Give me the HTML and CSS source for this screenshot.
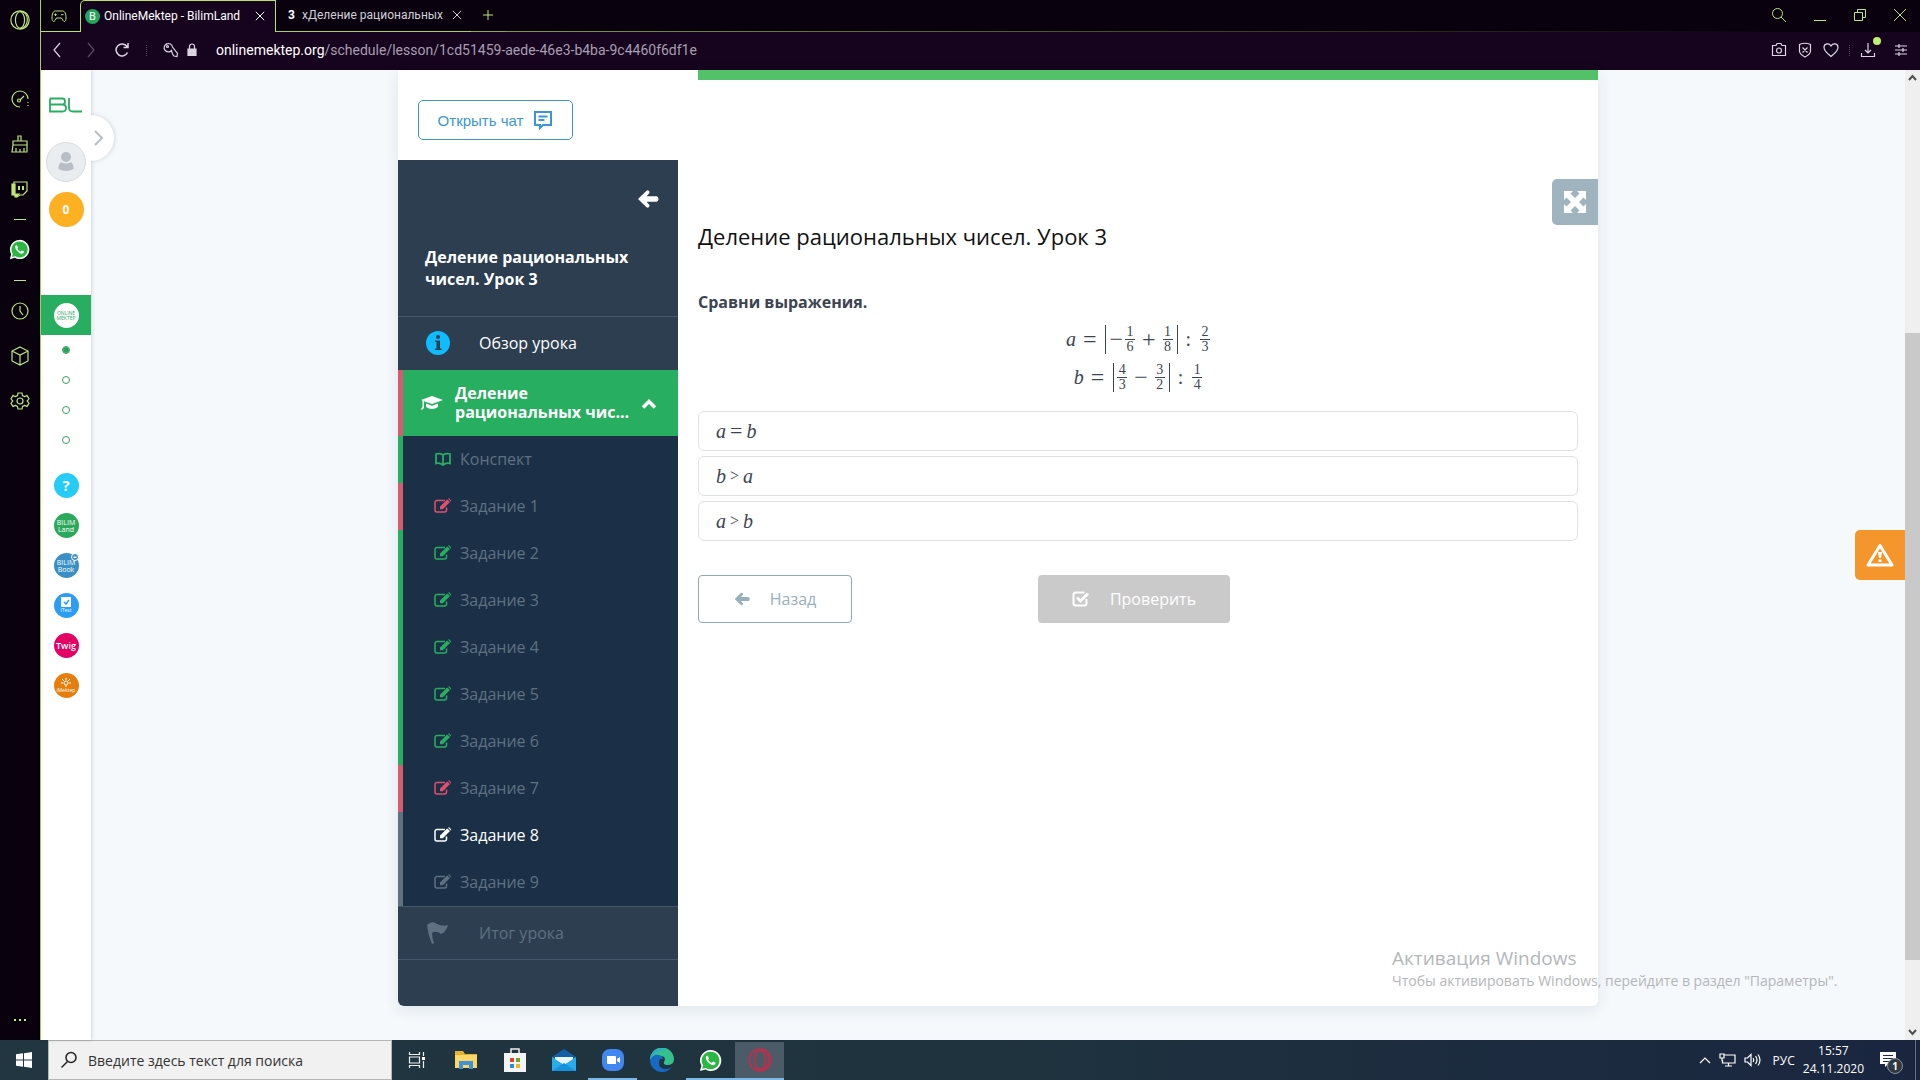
FILE: index.html
```html
<!DOCTYPE html>
<html lang="ru">
<head>
<meta charset="utf-8">
<meta name="viewport" content="width=device-width, initial-scale=1">
<title>OnlineMektep - BilimLand</title>
<link rel="stylesheet" href="styles.css">
</head>
<body>
<svg class="sprite" aria-hidden="true">
  <symbol id="edit" viewBox="0 0 18 16"><path d="M12.500 9.500V12a2 2 0 0 1-2 2H3a2 2 0 0 1-2-2V4.500a2 2 0 0 1 2-2h8" fill="none" stroke="currentColor" stroke-width="1.500"/><path d="M6 8.500 13.200 1.400 16 4.100 8.800 11.200H6z" fill="currentColor"/><path d="M14 .8a1.200 1.200 0 0 1 1.700 0l1.100 1.100a1.200 1.200 0 0 1 0 1.700" fill="currentColor"/></symbol>
  <symbol id="left" viewBox="0 0 22 18"><path d="M1 9 9.500.8q1.200-1 2.500.3 1 1.200 0 2.400L9.600 6.300H19.500q2 0 2 2.700t-2 2.700H9.600l2.400 2.800q1 1.200 0 2.400-1.300 1.300-2.500.3z" fill="currentColor"/></symbol>
  <symbol id="whatsapp" viewBox="0 0 24 24"><path d="M12 1a11 11 0 0 0-9.500 16.500L1 23l5.700-1.500A11 11 0 1 0 12 1z" fill="#fff"/><path d="M12 2.800a9.200 9.200 0 0 0-7.700 14.200l-1 3.700 3.800-1A9.200 9.200 0 1 0 12 2.800z" fill="#2cb742"/><path d="M8.500 6.800c-1.700 1-1.900 2.900-.6 5 1.500 2.500 3.500 4.300 6 5 1.700.4 3.200-.6 3.300-2.400l-2.500-1.300-1.300 1.400c-2-.8-3.100-2-3.900-3.600l1-1.300z" fill="#fff"/></symbol>
  <symbol id="opera" viewBox="0 0 24 24"><g fill="none" stroke="currentColor" stroke-width="1.300"><circle cx="12" cy="12" r="10"/><ellipse cx="12" cy="12" rx="5" ry="9"/><path d="M12 2.500c6 0 8 5 8 9.500s-3 9.500-8 9.500"/></g></symbol>
  <symbol id="close" viewBox="0 0 12 12"><path d="m1 1 10 10M11 1 1 11" stroke="currentColor" stroke-width="1.200" fill="none"/></symbol>
</svg>

<div class="desktop">
  <div class="browser">
    <aside class="gx">
      <button class="gx-logo" aria-label="Opera GX"><svg width="22" height="22"><use href="#opera"/></svg></button>
      <button class="gx-item" aria-label="GX Control"><svg width="20" height="20" viewBox="0 0 20 20"><path d="M10 18A8 8 0 1 1 18 10M10 11l4-4M18 13v1M18 16v1"/><circle cx="9" cy="11.500" r="1.500"/></svg></button>
      <button class="gx-item" aria-label="GX Cleaner"><svg width="20" height="20" viewBox="0 0 20 20"><path d="M8 7V2h3v5M3 7h14v4H3zM3 11l-1 7h15V11M6 14v4M10 15v3M14 14v4"/></svg></button>
      <button class="gx-item" aria-label="Twitch"><svg width="20" height="20" viewBox="0 0 20 20"><path d="M4 3h13v9l-4 4h-3l-3 2v-2H4z"/><path d="M2 5h3v10h4l-3 3H5v-2H2z" fill="currentColor"/><path d="M9 7v4M13 7v4" stroke-width="2"/></svg></button>
      <span class="gx-dash"></span>
      <button class="gx-item" aria-label="WhatsApp"><svg class="plain" width="21" height="21"><use href="#whatsapp"/></svg></button>
      <span class="gx-dash"></span>
      <button class="gx-item" aria-label="История"><svg width="20" height="20" viewBox="0 0 20 20"><circle cx="10" cy="10" r="8"/><path d="M10 5v5l3 4"/></svg></button>
      <button class="gx-item" aria-label="Расширения"><svg width="20" height="20" viewBox="0 0 20 20"><path d="m10 1 8 4v10l-8 4-8-4V5zM2 5l8 4 8-4M10 9v10"/></svg></button>
      <button class="gx-item" aria-label="Настройки"><svg width="20" height="20" viewBox="0 0 20 20"><path d="M8 2h4l.5 2.500 2 1L17 4.600l2 3.200L17.200 10 19 12.200l-2 3.200-2.500-.9-2 1L12 18H8l-.5-2.500-2-1-2.500.9-2-3.200L2.800 10 1 7.800l2-3.200 2.500.9 2-1z"/><circle cx="10" cy="10" r="3"/></svg></button>
      <button class="gx-more" aria-label="Ещё"><i></i><i></i><i></i></button>
    </aside>

    <div class="window">
      <header class="tabs">
        <button class="corner" aria-label="GX Corner"><svg width="16" height="14" viewBox="0 0 16 14"><path d="M4.500 2h7c2.500 0 3.500 3 3.500 7s-2 4-3 2.500L10.500 9h-5L4 11.500C3 13 1 13 1 9s1-7 3.500-7zM4.500 4.500v2.500M3.300 5.700h2.500M10 5.700h2.500"/></svg></button>
        <div class="tab active"><span class="fav">B</span><span class="tab-name">OnlineMektep - BilimLand</span><button class="x" aria-label="Закрыть"><svg width="10" height="10"><use href="#close"/></svg></button></div>
        <div class="tab"><b class="fav3">3</b><span class="tab-name">хДеление рациональных</span><button class="x" aria-label="Закрыть"><svg width="10" height="10"><use href="#close"/></svg></button></div>
        <button class="plus" aria-label="Новая вкладка"><svg width="12" height="12" viewBox="0 0 12 12"><path d="M6 1v10M1 6h10"/></svg></button>
        <div class="controls">
          <button aria-label="Поиск"><svg width="16" height="16" viewBox="0 0 16 16"><circle cx="6.500" cy="6.500" r="5"/><path d="m10 10 5 5"/></svg></button>
          <button aria-label="Свернуть"><svg width="14" height="14" viewBox="0 0 14 14"><path d="M1 12.500h12"/></svg></button>
          <button aria-label="Окно"><svg width="14" height="14" viewBox="0 0 14 14"><path d="M1.500 4.500h8v8h-8zM4.500 4V1.500h8v8H10"/></svg></button>
          <button aria-label="Закрыть"><svg width="14" height="14" viewBox="0 0 14 14"><path d="m1 1 12 12M13 1 1 13"/></svg></button>
        </div>
      </header>

      <div class="address">
        <button aria-label="Назад"><svg width="16" height="16" viewBox="0 0 16 16"><path d="M10 1 4 8l6 7"/></svg></button>
        <button class="dim" aria-label="Вперёд"><svg width="16" height="16" viewBox="0 0 16 16"><path d="m6 1 6 7-6 7"/></svg></button>
        <button aria-label="Обновить"><svg width="16" height="16" viewBox="0 0 16 16"><path d="M13.500 10.500A6 6 0 1 1 13 4.500M14 1v4.500H9.500" stroke-width="1.500"/></svg></button>
        <span class="sep"></span>
        <button class="tight" aria-label="Пароли"><svg width="16" height="16" viewBox="0 0 16 16"><path d="M8.500 8.500A4.200 4.200 0 1 1 9.500 5l5 6.500-.5 3-3-.5-1.500-2z"/><circle cx="4.500" cy="4.500" r="1"/></svg></button>
        <button class="tight" aria-label="Защищено"><svg width="10" height="14" viewBox="0 0 10 14"><path d="M2.500 6V3.500a2.500 2.500 0 0 1 5 0V6"/><path d="M1 6h8v6.500H1z" fill="currentColor"/></svg></button>
        <p class="url"><b>onlinemektep.org</b>/schedule/lesson/1cd51459-aede-46e3-b4ba-9c4460f6df1e</p>
        <div class="tools">
          <button aria-label="Снимок"><svg width="16" height="16" viewBox="0 0 16 16"><path d="M1.500 3.500H5L6 1.500h4l1 2h3.500v10h-13z"/><circle cx="8" cy="8.500" r="2.500"/></svg></button>
          <button aria-label="Блокировка"><svg width="16" height="16" viewBox="0 0 16 16"><path d="M2.500 2.500Q8 0 13.500 2.500v7Q13 12.500 8 15 3 12.500 2.500 9.500zM5.500 5.500l5 5M10.500 5.500l-5 5"/></svg></button>
          <button aria-label="Закладка"><svg width="16" height="16" viewBox="0 0 16 16"><path d="M8 14.500C3 10.500 1 8 1 5.500 1 1.500 6 .5 8 4c2-3.500 7-2.500 7 1.500 0 2.500-2 5-7 9z"/></svg></button>
          <span class="sep"></span>
          <button class="load" aria-label="Загрузки"><svg width="16" height="16" viewBox="0 0 16 16"><path d="M1.500 11v3.500h13V11M8 1v10M5 8l3 3 3-3"/></svg></button>
          <button aria-label="Меню"><svg width="14" height="14" viewBox="0 0 14 14"><path d="M1 3h12M1 7h12M1 11h12M5 1v4M9 5v4M5 9v4"/></svg></button>
        </div>
      </div>

      <div class="page">
        <nav class="rail">
          <a class="bl" href="#" aria-label="BilimLand"><svg width="34" height="16" viewBox="0 0 34 16"><path d="M1 1.500h12.500q2.500 0 2.500 3t-2.500 3H1M13.500 7.500q3.500 0 3.500 3.500t-3.500 3.500H1V1.500M20 1v10q0 3.500 4 3.500h9" fill="none" stroke="currentColor" stroke-width="1.800"/></svg></a>
          <button class="toggle" aria-label="Развернуть"><svg width="12" height="16" viewBox="0 0 12 16"><path d="m2 1 7 7-7 7" fill="none" stroke="currentColor" stroke-width="2"/></svg></button>
          <a class="avatar" href="#" aria-label="Профиль"><svg width="16" height="20" viewBox="0 0 16 20"><circle cx="8" cy="5" r="5" fill="currentColor"/><path d="M3 10q5 3 10 0 3 2 2.500 7-7.500 4-15 0Q0 12 3 10z" fill="currentColor"/></svg></a>
          <span class="points">0</span>
          <a class="current" href="#"><span>ONLINE<br>MEKTEP</span></a>
          <ul class="steps"><li class="on"></li><li></li><li></li><li></li></ul>
          <div class="apps">
            <a class="app help" href="#">?</a>
            <a class="app land" href="#">BILIM<br>Land</a>
            <a class="app book" href="#">BILIM<br>Book<svg class="badge" width="8" height="8" viewBox="0 0 8 8"><circle cx="4" cy="4" r="3.500" fill="#3a8fc4" stroke="#fff"/><path d="M2.500 5V3.500h3V5z" fill="#fff"/></svg></a>
            <a class="app test" href="#"><svg width="12" height="10" viewBox="0 0 12 10"><path d="M1 0h10v10H1z" fill="#fff"/><path d="m4 5 2 2 3-4" fill="none" stroke="#2b9df4" stroke-width="1.500"/></svg>iTest</a>
            <a class="app twig" href="#">Twig</a>
            <a class="app imek" href="#"><svg width="10" height="9" viewBox="0 0 10 9"><circle cx="5" cy="5" r="2" fill="none" stroke="#fff"/><path d="M5 0v2M1 1l2 2M9 1 7 3M0 5h2M8 5h2M4 8h2" stroke="#fff"/></svg>iMektep</a>
          </div>
        </nav>

        <main class="stage">
          <section class="card">
            <div class="card-top">
              <button class="chat">Открыть чат<svg width="20" height="20" viewBox="0 0 20 20"><path d="M2 2h16v13H10l-3 3v-3H2zM5.500 6.500h9M5.500 10h6" fill="none" stroke="currentColor" stroke-width="2"/></svg></button>
              <div class="progress"></div>
            </div>
            <div class="card-body">
              <nav class="menu">
                <div class="menu-head">
                  <button class="back" aria-label="Свернуть меню"><svg width="22" height="18"><use href="#left"/></svg></button>
                  <h2>Деление рациональных чисел. Урок 3</h2>
                </div>
                <a class="row" href="#"><svg width="24" height="24" viewBox="0 0 24 24"><circle cx="12" cy="12" r="12" fill="#0fbcff"/><circle cx="12" cy="6" r="2" fill="#2c3e50"/><path d="M9 9.500h5v8h1.500V19h-6.500v-1.500h1.500V11H9z" fill="#2c3e50"/></svg>Обзор урока</a>
                <button class="topic"><svg width="22" height="16" viewBox="0 0 22 16"><path d="M11 1 22 5 11 9 3 6.200V13L1 15l-1-1 1.500-2V5.500L0 5z" fill="currentColor"/><path d="m5 8.500 6 2.200 6-2.200V12q-6 4-12 0z" fill="currentColor"/></svg><span>Деление рациональных чис...</span><svg width="16" height="12" viewBox="0 0 16 12"><path d="m2 10.500 6-6 6 6" fill="none" stroke="currentColor" stroke-width="3.500"/></svg></button>
                <ul class="tasks">
                  <li class="ok"><a href="#"><svg width="16" height="14" viewBox="0 0 16 14"><path d="M8 3v10M8 3Q5 1 1 2v9.500q4-1 7 1.500 3-2.500 7-1.500V2Q11 1 8 3z" fill="none" stroke="currentColor" stroke-width="1.800"/></svg>Конспект</a></li>
                  <li class="bad"><a href="#"><svg width="18" height="16"><use href="#edit"/></svg>Задание 1</a></li>
                  <li class="ok"><a href="#"><svg width="18" height="16"><use href="#edit"/></svg>Задание 2</a></li>
                  <li class="ok"><a href="#"><svg width="18" height="16"><use href="#edit"/></svg>Задание 3</a></li>
                  <li class="ok"><a href="#"><svg width="18" height="16"><use href="#edit"/></svg>Задание 4</a></li>
                  <li class="ok"><a href="#"><svg width="18" height="16"><use href="#edit"/></svg>Задание 5</a></li>
                  <li class="ok"><a href="#"><svg width="18" height="16"><use href="#edit"/></svg>Задание 6</a></li>
                  <li class="bad"><a href="#"><svg width="18" height="16"><use href="#edit"/></svg>Задание 7</a></li>
                  <li class="now"><a href="#"><svg width="18" height="16"><use href="#edit"/></svg>Задание 8</a></li>
                  <li><a href="#"><svg width="18" height="16"><use href="#edit"/></svg>Задание 9</a></li>
                </ul>
                <a class="row end" href="#"><svg width="24" height="24" viewBox="0 0 24 24"><path d="M1 4Q6-1 11 3q6 3 11 1-2 7-7 9-5-4-9-1 0 5 2 10l-2 1Q2 14 1 4z" fill="currentColor"/></svg>Итог урока</a>
              </nav>

              <div class="lesson">
                <button class="full" aria-label="Во весь экран"><svg width="22" height="22" viewBox="0 0 22 22"><path d="M0 0h9L6.500 2.500 11 7l4.500-4.500L13 0h9v9l-2.500-2.500L15 11l4.500 4.500L22 13v9h-9l2.500-2.500L11 15l-4.500 4.500L9 22H0v-9l2.500 2.500L7 11 2.500 6.500 0 9z" fill="currentColor"/></svg></button>
                <h1>Деление рациональных чисел. Урок 3</h1>
                <h3>Сравни выражения.</h3>
                <div class="formula">
                  <div class="eq"><i>a</i><span class="rel">=</span><span class="abs">−<span class="frac"><span>1</span><span>6</span></span><span class="op">+</span><span class="frac"><span>1</span><span>8</span></span></span><span class="div">:</span><span class="frac"><span>2</span><span>3</span></span></div>
                  <div class="eq"><i>b</i><span class="rel">=</span><span class="abs"><span class="frac"><span>4</span><span>3</span></span><span class="op">−</span><span class="frac"><span>3</span><span>2</span></span></span><span class="div">:</span><span class="frac"><span>1</span><span>4</span></span></div>
                </div>
                <div class="answers">
                  <button><i>a</i><span>=</span><i>b</i></button>
                  <button><i>b</i><span class="gt">&gt;</span><i>a</i></button>
                  <button><i>a</i><span class="gt">&gt;</span><i>b</i></button>
                </div>
                <div class="actions">
                  <button class="prev"><svg width="16" height="14"><use href="#left"/></svg>Назад</button>
                  <button class="check"><svg width="18" height="16" viewBox="0 0 18 16"><path d="M14.500 8v4.500a2 2 0 0 1-2 2h-9a2 2 0 0 1-2-2v-9a2 2 0 0 1 2-2h9" fill="none" stroke="currentColor" stroke-width="2"/><path d="m5 6.500 3.500 3.500L16 2.500" fill="none" stroke="currentColor" stroke-width="3"/></svg>Проверить</button>
                </div>
              </div>
            </div>
          </section>
          <button class="report" aria-label="Сообщить об ошибке"><svg width="28" height="24" viewBox="0 0 28 24"><path d="M14 2.500 26 22H2z" fill="none" stroke="#fff" stroke-width="3" stroke-linejoin="round"/><path d="M12 9h4l-1 6h-2zM12.500 16.500h3v2.500h-3z" fill="#fff"/></svg></button>
        </main>
        <div class="scroll"><svg width="9" height="7" viewBox="0 0 9 7"><path d="m1 6 3.500-4L8 6"/></svg><span class="thumb"></span><svg width="9" height="7" viewBox="0 0 9 7"><path d="m1 1 3.500 4L8 1"/></svg></div>
        <div class="activate"><p class="act-title">Активация Windows</p><p class="act-text">Чтобы активировать Windows, перейдите в раздел "Параметры".</p></div>
      </div>
    </div>
  </div>

  <footer class="taskbar">
    <button class="start" aria-label="Пуск"><svg width="16" height="16" viewBox="0 0 16 16"><path d="m0 2.300 7-1v6.200H0zM8 1.200 16 0v7.500H8zM0 8.500h7v6.200l-7-1zM8 8.500h8V16l-8-1.200z" fill="#fff"/></svg></button>
    <label class="search"><svg width="18" height="18" viewBox="0 0 18 18"><circle cx="11" cy="6.500" r="5" fill="none" stroke="#222" stroke-width="1.500"/><path d="m7.500 10.500-6 6" stroke="#222" stroke-width="1.500"/></svg><input type="text" placeholder="Введите здесь текст для поиска" aria-label="Поиск"></label>
    <div class="pins">
      <button aria-label="Представление задач"><svg width="18" height="16" viewBox="0 0 18 16"><path d="M1.500 0v2.500h10V0M1.500 16v-2.500h10V16M1.500 5h10v6h-10zM15.500 0v4M15.500 9v7" fill="none" stroke="#eee" stroke-width="1.200"/><path d="M14 5h3v3h-3z" fill="#fff"/></svg></button>
      <button aria-label="Проводник"><svg width="22" height="20" viewBox="0 0 22 20"><path d="M0 1h8l2 3h12v14H0z" fill="#e8b22e"/><path d="M0 5h22v13H0z" fill="#fbd768"/><path d="M4 19v-8h14v8h-4v-4H8v4z" fill="#3f92d8"/></svg></button>
      <button aria-label="Магазин"><svg width="22" height="24" viewBox="0 0 22 24"><path d="M7 6V1h8v5" fill="none" stroke="#eee" stroke-width="1.500"/><path d="M0 5h22v19H0z" fill="#f4f4f4"/><path d="M6 10h4v4H6z" fill="#d8452b"/><path d="M12 10h4v4h-4z" fill="#6ea62c"/><path d="M6 16h4v4H6z" fill="#2a8fdc"/><path d="M12 16h4v4h-4z" fill="#f0b325"/></svg></button>
      <button aria-label="Почта"><svg width="24" height="22" viewBox="0 0 24 22"><path d="M0 8 12 0l12 8v14H0z" fill="#1261a8"/><path d="M3 8h18v8H3z" fill="#e8f5fb"/><path d="m0 8 12 8 12-8v14H0z" fill="#29abe9"/><path d="m0 22 12-8 12 8z" fill="#1592dc"/></svg></button>
      <button class="open" aria-label="Zoom"><svg width="24" height="24" viewBox="0 0 24 24"><rect x="1" y="1" width="22" height="22" rx="8" fill="#4286f0"/><path d="M6 8h8q1 0 1 1v7H7q-1 0-1-1zM16 11l3-2v6l-3-2z" fill="#fff"/></svg></button>
      <button aria-label="Edge"><svg width="24" height="24" viewBox="0 0 24 24"><path d="M0 12a12 12 0 0 1 24-1q0 6-7 6-4 0-3-3 3-6-4-6-6 0-10 4z" fill="#35c18e"/><path d="M0 12a12 12 0 0 1 18-10Q6 0 0 12z" fill="#2aa9d8"/><path d="M0 12q3-6 9-5 4 1 4 4-4-1-4 4 0 6 7 6 4 0 6-2-4 5-10 5A12 12 0 0 1 0 12z" fill="#1769c5"/></svg></button>
      <button class="open" aria-label="WhatsApp"><svg width="23" height="23"><use href="#whatsapp"/></svg></button>
      <button class="open active" aria-label="Opera GX"><svg width="26" height="26"><use href="#opera"/></svg></button>
    </div>
    <div class="tray">
      <svg width="12" height="8" viewBox="0 0 12 8"><path d="m1 7 5-5 5 5"/></svg>
      <svg width="17" height="14" viewBox="0 0 17 14"><path d="M5 2h11v8H3.500V7M9.500 10v3M6 13h7M1 1h4v4H1zM3 5v3"/></svg>
      <svg width="17" height="14" viewBox="0 0 17 14"><path d="M1 5h2.500L7 1.500v11L3.500 9H1zM9 5q1.500 2 0 4M11.500 3q3 4 0 8M14 1.500q4 5.500 0 11"/></svg>
      <span class="lang">РУС</span>
      <p class="clock">15:57<br>24.11.2020</p>
      <span class="note"><svg width="18" height="16" viewBox="0 0 18 16"><path d="M1 0h16v12H9l-3 3v-3H1z" fill="#fff" stroke="none"/><path d="M4 3.500h10M4 6.500h10M4 9.500h6" stroke="#1a2a3f"/></svg><b>1</b></span>
      <span class="peek"></span>
    </div>
  </footer>
</div>
</body>
</html>
```
FILE: styles.css
```css
*{box-sizing:border-box}
body{margin:0;font-family:"Open Sans","Noto Sans",sans-serif;font-size:16px;color:#3d4451;background:#09010e}
button{font:inherit;color:inherit;background:none;border:0;padding:0;display:flex;align-items:center;justify-content:center}
a{color:inherit;text-decoration:none}
ul,p,h1,h2,h3{margin:0;padding:0;list-style:none}
svg{display:block;flex:none}
.sprite{position:absolute;width:0;height:0}
.desktop{display:flex;flex-direction:column;min-height:100vh}
.browser{display:flex;flex:1}

/* Opera GX sidebar */
.gx{width:41px;background:#09010e;display:flex;flex-direction:column;color:#bfe57a;border-right:1px solid #a9cf5e;padding-right:1px}
.gx svg:not(.plain){fill:none;stroke:currentColor;stroke-width:1.200}
.gx-logo{height:40px;margin-bottom:36px}
.gx-item{height:45px}
.gx-dash{height:16px;display:grid;place-items:center}
.gx-dash::after{content:"";width:12px;height:1px;background:#bfe57a}
.gx-more{margin-top:auto;height:40px;gap:3px}
.gx-more i{width:2px;height:2px;background:#c8f070}

.window{flex:1;min-width:0;display:flex;flex-direction:column}
.tabs{height:32px;background:#09010e;display:flex;align-items:stretch;color:#d0d0d8;font:12px Roboto,"Open Sans",sans-serif;padding-right:13px}
.tabs svg{fill:none;stroke:currentColor}
.tabs::after{content:"";flex:1;order:1;border-bottom:1px solid;border-image:linear-gradient(90deg,#7c9a42,#09010e) 1}
.corner{width:39px;padding:0 4px 0 0;color:#bfe57a;border-bottom:1px solid #b9e268}
.tab{display:flex;align-items:center;width:195px;padding:0 8px 1px 12px;gap:6px;border-bottom:1px solid #a9cf5e}
.tab-name{flex:1;min-width:0;white-space:nowrap}
.tab.active{background:#16041e;color:#fff;padding:0 9px 1px 4px;gap:4px;border:1px solid #b9e268;border-bottom:0;border-radius:5px 0 0 0;width:196px}
.fav{width:15px;height:15px;border-radius:8px;background:#27a35c;display:grid;place-items:center;font-size:11px;line-height:15px}
.fav3{color:#fff;width:8px}
.x{width:12px}
.plus{color:#bfe57a;width:34px;padding-bottom:2px;border-bottom:1px solid #8aac4a}
.controls{order:2;display:flex;align-items:center;gap:26px;color:#bfe57a;padding-bottom:2px}
.address{height:38px;background:#16041e;color:#dcd4e2;display:flex;align-items:center;padding:0 12px 2px 9px;gap:16px}
.address svg{fill:none;stroke:currentColor;stroke-width:1.200}
.dim{opacity:.35}
.sep{width:1px;height:11px;border-left:1px dotted #554760}
.address .tight{margin-right:-8px}
.url{font-family:Roboto,"Open Sans",sans-serif;font-size:14px;color:#a79fb0;flex:1;padding-left:11px}
.url b{font-weight:400;color:#fff}
.tools{display:flex;align-items:center;gap:10px}
.load{position:relative;margin:0 8px 0 0}
.load::after{content:"";position:absolute;right:-5px;top:-5px;width:8px;height:8px;border-radius:4px;background:#c3f06c}

/* page */
.page{flex:1;display:flex;background:#f5f9fc;position:relative}
.rail{width:50px;background:#fff;box-shadow:1px 0 4px #0002;position:relative;z-index:1;display:flex;flex-direction:column;align-items:center}
.bl{color:#27ae60;margin:27px 0 29px}
.toggle{position:absolute;z-index:-1;top:45px;left:27px;width:46px;height:46px;border-radius:23px;background:#fff;box-shadow:1px 0 4px #0002;justify-content:flex-end;padding-right:9px;color:#b9bec4}
.rail::before{content:"";position:absolute;z-index:0;inset:40px 0 auto 0;height:56px;background:#fff}
.avatar,.bl{position:relative;z-index:1}
.toggle svg{position:relative}
.avatar{width:40px;height:40px;border-radius:20px;background:#e9edef;border:1px solid #d8dcdf;color:#b8bec4;display:grid;place-items:center}
.points{width:35px;height:35px;border-radius:18px;background:#fdb022;color:#fff;font-size:12px;font-weight:700;display:grid;place-items:center;margin:10px 0 68px}
.current{width:50px;height:40px;background:#27ae60;display:grid;place-items:center}
.current span{width:25px;height:25px;border-radius:13px;background:#fff;color:#27ae60;font-size:5px;line-height:5px;text-align:center;padding-top:8px}
.steps{display:flex;flex-direction:column;gap:24px;margin:12px 0 30px;padding-right:1px}
.steps li{width:6px;height:6px;border-radius:3px;outline:1px solid #3b9c66}
.steps .on{background:#27a35c}
.apps{display:flex;flex-direction:column;gap:15px}
.app{width:25px;height:25px;border-radius:13px;color:#fff;position:relative;display:flex;flex-direction:column;align-items:center;justify-content:center;text-align:center;font-size:7px;line-height:7px}
.badge{position:absolute;right:0;top:0}
.help{background:#25ccf7;font-size:15px;font-weight:700}
.land{background:#2ba85c}
.book{background:#3a8fc4}
.test{background:#2b9df4;font-size:5px}
.twig{background:#e50064;font-size:9px;font-weight:600}
.imek{background:#e67e0c;font-size:5px}

.stage{flex:1;display:flex;justify-content:center;align-items:flex-start;padding:0 20px 34px;position:relative}
.card{flex:0 1 1200px;background:#fff;box-shadow:0 4px 16px #1a2a4018;border-radius:0 0 6px 6px}
.card-top{height:90px;display:flex;align-items:flex-start;padding-left:20px}
.chat{width:155px;height:40px;margin:30px 125px 0 0;border:1px solid #3b97c9;border-radius:5px;color:#3b97d3;font-family:"Liberation Sans",sans-serif;font-size:15px;gap:10px}
.progress{flex:1;height:10px;background:#52c168}
.card-body{display:flex;align-items:stretch;min-height:846px}
.menu{width:280px;background:#2c3e50;color:#fff;border-radius:0 0 0 6px;display:flex;flex-direction:column}
.menu-head{height:157px;padding:28px 19px 0 27px;border-bottom:1px solid #45586b}
.back{margin:0 0 36px auto;height:22px}
.menu h2{font-size:16px;line-height:22px;font-weight:700}
.row{height:53px;display:flex;align-items:center;gap:29px;padding:0 0 2px 28px}
.topic{height:66px;background:#27ae60;border-left:5px solid #d65b70;text-align:left;gap:12px;padding:0 21px 0 18px;font-weight:700;line-height:19px}
.topic span{flex:1;margin-right:-6px}
.tasks li{height:47px;background:#1b3047;border-left:5px solid #61717f;color:#5f7080}
.tasks a{height:47px;display:flex;align-items:center;gap:8px;padding:0 0 2px 31px}
.tasks svg{width:18px;color:#5f7080}
.tasks .ok{border-color:#27ae60}
.tasks .ok svg{color:#27ae60}
.tasks .bad{border-color:#d65b70}
.tasks .bad svg{color:#e0506f}
.tasks .now a,.tasks .now svg{color:#fff}
.end{border:solid #45586b;border-width:1px 0;color:#5f7080;height:54px;padding-bottom:0}

.lesson{flex:1;padding:61px 20px 0;position:relative}
.full{position:absolute;right:0;top:19px;width:46px;height:46px;background:#a0b4c0;color:#fff;border-radius:5px 0 0 5px}
h1{font-size:22px;font-weight:400;line-height:30px;color:#111}
h3{font-size:16px;line-height:24px;font-weight:700;margin:39px 0 6px}
.formula{font-family:"Liberation Serif",serif;font-size:20px;line-height:36px}
.eq{display:flex;align-items:center;justify-content:center;height:38px}
.eq i,.answers i{font-family:"Liberation Serif",serif;font-size:20px}
.rel{margin:0 9px 0 7px;font-size:24px}
.abs{display:inline-flex;align-items:center;height:29px;border:solid #3d4451;border-width:0 1px;padding:0 4px 0 3px;font-size:24px;gap:2px}
.op{margin:0 5px}
.frac{display:inline-flex;flex-direction:column;font-size:14px;line-height:14px;width:10px;text-align:center}
.frac span:first-child{border-bottom:1px solid #3d4451}
.div{margin:0 9px 0 8px}
.answers{display:flex;flex-direction:column;gap:5px;margin-top:15px}
.answers button{height:40px;border:1px solid #dfe2e5;border-radius:6px;justify-content:flex-start;padding:0 17px;gap:4px;font-family:"Liberation Serif",serif;font-size:22px}
.answers .gt{font-size:16px}
.actions{display:flex;margin-top:34px;gap:186px}
.actions button{height:48px;border-radius:4px;gap:20px}
.prev{width:154px;border:1px solid #90a8b8;color:#98afbd}
.check{width:192px;background:#cacaca;color:#fff}
.report{position:absolute;right:0;top:460px;width:50px;height:50px;background:#f5962d;border-radius:5px 0 0 5px}
.scroll{width:15px;background:#efefef;display:flex;flex-direction:column;align-items:center;padding:4px 0}
.scroll svg{fill:none;stroke:#505050;stroke-width:2}
.thumb{align-self:stretch;background:#c9c9c9;margin:auto 0 69px;flex:0 0 627px}
.activate{position:absolute;left:calc(100% - 528px);bottom:49px;color:#b4b6b8;z-index:2;white-space:nowrap}
.act-title{font-size:19px;line-height:26px}
.act-text{font-size:14px;line-height:20px}

/* Windows taskbar */
.taskbar{height:40px;display:flex;background:linear-gradient(90deg,#213641,#1f333e 50%,#1a2640);color:#fff}
.start{width:48px}
.search{width:344px;background:#f1f1f1;border:1px solid #b5b5b5;display:flex;align-items:center;gap:10px;padding:0 11px}
.search input{flex:1;border:0;background:none;font:14px "Open Sans",sans-serif;color:#333;padding:0;min-width:0}
.search input::placeholder{color:#333}
.pins{display:flex;flex:1}
.pins button{width:49px;border:solid transparent;border-width:2px 0}
.pins .open{border-bottom-color:#7db8e8}
.pins .active{background:#4b5c68;color:#cc2846;background-clip:padding-box}
.tray{display:flex;align-items:center;gap:8px;padding-right:4px;font-size:12px}
.tray svg{fill:none;stroke:#fff;stroke-width:1.200}
.lang{margin-left:4px}
.clock{text-align:center;line-height:18px;margin-right:7px}
.note{position:relative}
.note b{position:absolute;left:8px;top:6px;width:16px;height:16px;border-radius:8px;background:#303841;border:1px solid #8a9098;display:grid;place-items:center;font-size:10px;line-height:14px}
.peek{width:1px;align-self:stretch;background:#66707c;margin-left:10px}
```
